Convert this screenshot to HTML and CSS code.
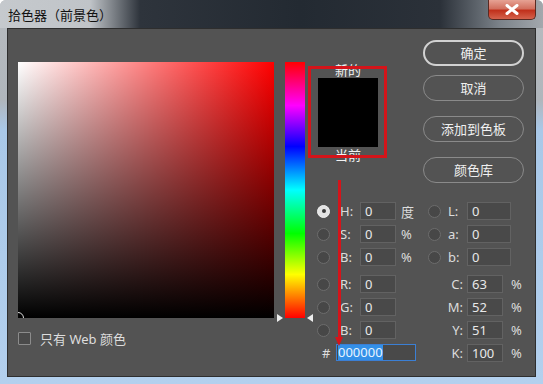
FILE: index.html
```html
<html>
<head>
<meta http-equiv="content-type" content="text/html; charset=UTF-8">
<title>拾色器</title>
<link rel="stylesheet" href="styles.css">
</head>
<body>
	<div class="window">
		<div class="titlebar">
			<span class="title">拾色器（前景色）</span>
			<span class="close">
				<svg width="14" height="11" viewBox="0 0 14 11"><path d="M2 1.5 L12 9.5 M12 1.5 L2 9.5" stroke="#fff" stroke-width="3" stroke-linecap="round"/></svg>
			</span>
		</div>
		<div class="panel">
			<div class="picker">
				<div class="left">
					<div class="field"><span class="marker"></span></div>
					<div class="webonly"><span class="check"></span>只有 Web 颜色</div>
				</div>
				<div class="hue">
					<span class="tri tri-l"></span>
					<span class="tri tri-r"></span>
				</div>
				<div class="right">
					<div class="top">
						<div class="swatch">
							<div class="cap">新的</div>
							<div class="color"></div>
							<div class="cap">当前</div>
						</div>
						<div class="buttons">
							<div class="btn btn-ok">确定</div>
							<div class="btn btn-cancel">取消</div>
							<div class="btn btn-gap">添加到色板</div>
							<div class="btn btn-gap">颜色库</div>
						</div>
					</div>
					<div class="fields">
						<div class="group hsb">
							<div class="row"><span class="radio on"></span><span class="lbl">H:</span><span class="inp">0</span><span class="unit">度</span></div>
							<div class="row"><span class="radio"></span><span class="lbl">S:</span><span class="inp">0</span><span class="unit">%</span></div>
							<div class="row sep"><span class="radio"></span><span class="lbl">B:</span><span class="inp">0</span><span class="unit">%</span></div>
							<div class="row"><span class="radio"></span><span class="lbl">R:</span><span class="inp">0</span></div>
							<div class="row"><span class="radio"></span><span class="lbl">G:</span><span class="inp">0</span></div>
							<div class="row"><span class="radio"></span><span class="lbl">B:</span><span class="inp">0</span></div>
							<div class="row hex"><span class="hash">#</span><span class="inp inp-hex"><span class="sel">000000</span></span></div>
						</div>
						<div class="group lab">
							<div class="row"><span class="radio"></span><span class="lbl">L:</span><span class="inp wide">0</span></div>
							<div class="row"><span class="radio"></span><span class="lbl">a:</span><span class="inp wide">0</span></div>
							<div class="row sep"><span class="radio"></span><span class="lbl">b:</span><span class="inp wide">0</span></div>
							<div class="row"><span class="lbl rt">C:</span><span class="inp">63</span><span class="unit">%</span></div>
							<div class="row"><span class="lbl rt">M:</span><span class="inp">52</span><span class="unit">%</span></div>
							<div class="row"><span class="lbl rt">Y:</span><span class="inp">51</span><span class="unit">%</span></div>
							<div class="row"><span class="lbl rt">K:</span><span class="inp">100</span><span class="unit">%</span></div>
						</div>
					</div>
				</div>
			</div>
			<!-- 标注 -->
			<div class="mark-box"></div>
			<div class="mark-arrow"></div>
		</div>
	</div>
</body>
</html>
```

FILE: styles.css
```css
*{margin: 0;padding: 0;box-sizing: border-box;}
body{font-family: "Noto Sans", "Noto Sans CJK SC", sans-serif;font-size: 13px;background: #fff;}

.window{width: 543px;height: 384px;padding: 0 7px 7px 7px;border-radius: 6px 6px 0 0;
	background: linear-gradient(to bottom, #b7bbbf 0, #b0b6bc 100px, #a9c8e8 130px, #b3d0ee 100%);}
.titlebar{height: 28px;margin: 0 -7px;display: flex;justify-content: space-between;align-items: flex-start;border-radius: 6px 6px 0 0;
	background: linear-gradient(to right, #c5c9cd 0, #c0c4c8 90px, #2e343c 140px, #232a32 300px, #2b3139 440px, #7c838a 500px, #a3a8ad 100%);}
.title{margin: 7px 0 0 8px;color: #111;font-size: 13px;line-height: 16px;}
.close{width: 48px;height: 20px;margin-right: 7px;display: flex;align-items: center;justify-content: center;
	border: 1px solid #5a2a22;border-top: none;border-radius: 0 0 5px 5px;
	background: linear-gradient(to bottom, #e6a294 0, #d2705f 45%, #c1311c 55%, #d4624c 100%);}

.panel{position: relative;height: 349px;background: #535353;border: 1px solid #2e2e2e;}
.picker{display: flex;padding: 11px 0 0 10px;}

.left{margin-top: 22px;width: 256px;}
.field{position: relative;width: 256px;height: 256px;overflow: hidden;
	background: linear-gradient(to top, #000, rgba(0,0,0,0)), linear-gradient(to right, #fff, #f00);}
.marker{position: absolute;left: -6px;bottom: -6px;width: 12px;height: 12px;border: 1px solid #ddd;border-radius: 50%;}
.webonly{display: flex;align-items: center;margin-top: 14px;height: 13px;color: #ddd;}
.check{width: 13px;height: 13px;margin-right: 9px;border: 1px solid #8c8c8c;background: #4a4a4a;border-radius: 1px;}

.hue{position: relative;margin: 22px 0 0 11px;width: 20px;height: 256px;
	background: linear-gradient(to bottom, #f00 0%, #f0f 17%, #00f 33%, #0ff 50%, #0f0 67%, #ff0 83%, #f00 100%);}
.tri{position: absolute;bottom: -4px;width: 0;height: 0;border-top: 4px solid transparent;border-bottom: 4px solid transparent;}
.tri-l{left: -8px;border-left: 6px solid #eee;}
.tri-r{right: -8px;border-right: 6px solid #eee;}

.right{flex: 1;}
.top{display: flex;height: 146px;}
.swatch{margin: 22px 0 0 13px;width: 60px;}
.cap{height: 16px;line-height: 16px;text-align: center;color: #f2f2f2;}
.color{height: 69px;background: #000;}
.buttons{margin: 0 11px 0 auto;display: flex;flex-direction: column;}
.btn{width: 101px;height: 26px;line-height: 24px;text-align: center;color: #f0f0f0;border: 1px solid #8a8a8a;border-radius: 13px;}
.btn-ok{border: 2px solid #d2d2d2;line-height: 22px;}
.btn-cancel{margin-top: 9px;}
.btn-gap{margin-top: 15px;}

.fields{display: flex;margin-top: 16px;padding-left: 12px;}
.group.hsb{width: 111px;}
.row{display: flex;align-items: center;height: 18px;margin-bottom: 5px;color: #dcdcdc;}
.row.sep{margin-bottom: 9px;}
.radio{width: 13px;height: 13px;margin-right: 10px;border: 1px solid #6c6c6c;border-radius: 50%;background: #474747;}
.radio.on{position: relative;background: #e4e4e4;border-color: #f0f0f0;}
.radio.on:after{content: "";position: absolute;left: 3.5px;top: 3.5px;width: 4px;height: 4px;border-radius: 50%;background: #3a3a3a;}
.lbl{width: 20px;}
.inp{width: 36px;height: 18px;padding-left: 4px;line-height: 16px;color: #e8e8e8;background: #494949;border: 1px solid #626262;}
.inp.wide{width: 44px;}
.unit{margin-left: 5px;}
.lab .radio{margin-right: 7px;}
.lab .lbl{width: 19px;}
.lab .lbl.rt{width: 39px;padding-right: 4px;text-align: right;}
.lab .unit{margin-left: 8px;}

.row.hex{margin-top: 3px;height: 17px;}
.hash{margin-left: 5px;width: 14px;}
.inp-hex{width: 80px;height: 17px;padding-left: 1px;border-color: #3b7fd4;line-height: 15px;}
.sel{display: inline-block;background: #3390e8;color: #e6f4ff;}

.mark-box{position: absolute;left: 300px;top: 37px;width: 79px;height: 92px;border: 3px solid #d4141a;}
.mark-arrow{position: absolute;left: 330px;top: 151px;width: 3px;height: 157px;background: #d4141a;}
.mark-arrow:after{content: "";position: absolute;left: -3px;bottom: -9px;border-left: 4.5px solid transparent;border-right: 4.5px solid transparent;border-top: 9px solid #d4141a;}
```
